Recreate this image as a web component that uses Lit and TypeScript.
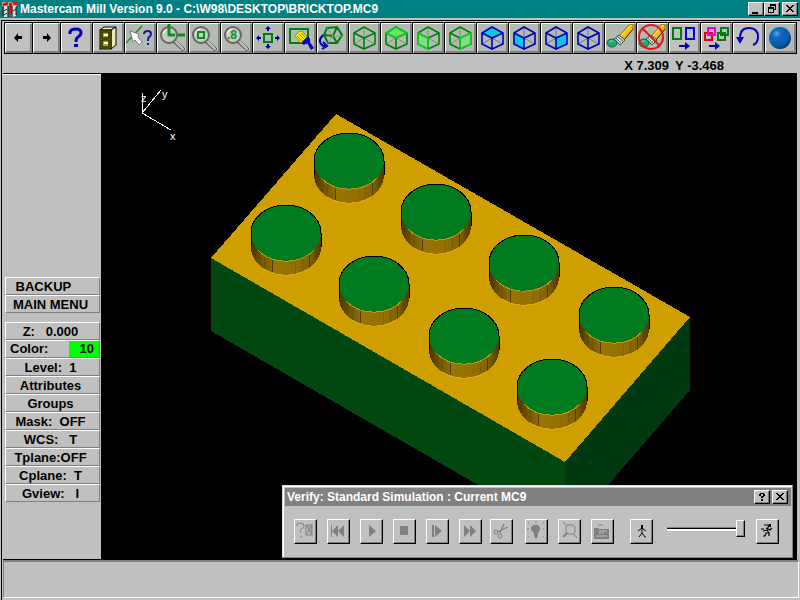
import { LitElement, html, css, svg } from "lit";
import { customElement, property } from "lit/decorators.js";
import { classMap } from "lit/directives/class-map.js";

const GREEN = "#007f10";
const BLUE = "#0000b8";

/* ---------- toolbar icons, drawn on a 31 x 30 grid ---------- */

const lens = (body: unknown) => svg`
  <path d="M17 18L26 26" stroke="#666" stroke-width="4" stroke-linecap="round"/>
  <path d="M18 18L26 26" stroke="#c8ccc8" stroke-width="2" stroke-linecap="round"/>
  <circle cx="12" cy="12" r="8" fill="#c4ccc4" stroke="#666" stroke-width="2"/>
  <path d="M6 11a6 6 0 0 1 5-5" fill="none" stroke="#fff" stroke-width="1"/>
  ${body}`;

const cube = (color: string, face = "", fill = "none") => {
  const faces: Record<string, string> = {
    top: "M15 4L26 10L15 15L5 10Z",
    left: "M5 10L15 15V26L5 21Z",
    right: "M26 10L15 15V26L26 21Z",
  };
  return svg`
    <path d="M15 4V15L5 21M15 15L26 21" fill="none" stroke=${color} stroke-opacity=".4"/>
    ${face ? svg`<path d=${faces[face]} fill=${fill} fill-opacity=".9"/>` : ""}
    <path d="M15 4L26 10V21L15 26L5 21V10Z" fill="none" stroke=${color} stroke-width="1.6"/>
    <path d="M5 10L15 15L26 10M15 15V26" fill="none" stroke=${color} stroke-width="1.6"/>
    ${face && color === GREEN ? svg`<path d=${faces[face]} fill="none" stroke="#10d818" stroke-width="1.4"/>` : ""}`;
};

const eraser = svg`
  <path d="M14 13L24 2L28 1V6L19 17Z" fill="#f0c010" stroke="#a07800"/>
  <path d="M16 13L26 2" stroke="#fff080"/>
  <path d="M28 6L19 17" stroke="#403000"/>
  <path d="M9 16L14 12L20 17L15 22Z" fill="#c8d0d0" stroke="#444"/>
  <path d="M10 14L17 21M12 13L19 19" stroke="#666"/>
  <path d="M12 15L15 18" stroke="#fff"/>
  <ellipse cx="7" cy="20" rx="5" ry="4" fill="#20a878" stroke="#066048"/>
  <path d="M4 19Q5 18 8 18" stroke="#80e0b8"/>`;

const arrow = (x: number) => svg`<path d="M${x} 22h6v-3l5 4l-5 4v-3h-6z" fill=${BLUE}/>`;
const box = (x: number, y: number, w: number, h: number, c: string) =>
  svg`<rect x=${x} y=${y} width=${w} height=${h} fill="none" stroke=${c} stroke-width="2"/>`;

const tools: { label: string; plain?: boolean; small?: boolean; icon: unknown }[] = [
  { label: "Previous page", plain: true, small: true,
    icon: svg`<path d="M9 15L13 10V13H17V16H13V19Z" fill="#000"/>` },
  { label: "Next page", plain: true, small: true,
    icon: svg`<path d="M18 15L14 10V13H10V16H14V19Z" fill="#000"/>` },
  { label: "Help", plain: true,
    icon: svg`<path d="M9 11V9Q10 6 15 6Q20 6 20 10Q20 12 17 14Q15 15 15 19" fill="none" stroke="#0000c8" stroke-width="3"/>
      <rect x="13" y="21" width="4" height="3" fill="#0000c8"/>` },
  { label: "File", plain: true,
    icon: svg`<path d="M7 7L11 4H23L18 7Z" fill="#f0f0c0" stroke="#000"/>
      <path d="M18 7L23 4V22L18 26Z" fill="#e8e8b8" stroke="#000"/>
      <rect x="7" y="7" width="11" height="19" fill="#8a8a00" stroke="#000"/>
      <rect x="9" y="9" width="7" height="6" fill="#a8a800" stroke="#000"/>
      <rect x="9" y="17" width="7" height="7" fill="#a8a800" stroke="#000"/>
      <path d="M11 12h4M11 20h4" stroke="#fff" stroke-width="2"/>` },
  { label: "Analyze",
    icon: svg`<path d="M1 20L17 3" stroke="#109020" stroke-width="1.5"/>
      <path d="M5 8L14 11L13 14L17 19L14 22L10 17L8 19Z" fill="#fff" stroke="#777"/>
      <path d="M19 11Q19 8 23 8Q26 8 26 11Q26 13 24 14Q23 15 23 18M23 20V22" fill="none" stroke="#1818a8" stroke-width="2"/>` },
  { label: "Zoom previous",
    icon: lens(svg`<path d="M12 1V12H18M21 12H28" fill="none" stroke="#089018" stroke-width="3"/>`) },
  { label: "Zoom window", icon: lens(box(9, 9, 6, 6, "#089018")) },
  { label: "Zoom eight tenths",
    icon: lens(svg`<text x="6" y="16" class="digit">.8</text>`) },
  { label: "Fit",
    icon: svg`${box(11, 11, 8, 8, GREEN)}
      <path d="M15 3L18 6H16V8H14V6H12ZM15 26L18 23H16V21H14V23H12ZM3 15L6 12V14H8V16H6V18ZM27 15L24 12V14H22V16H24V18Z" fill=${BLUE}/>` },
  { label: "Repaint",
    icon: svg`${box(5, 6, 18, 14, GREEN)}
      <path d="M10 13L13 9L17 8L22 14L16 20Z" fill="#f0e800" stroke="#a89800"/>
      <path d="M12 13L17 18M14 11L19 16M16 10L20 14" stroke="#a89800"/>
      <path d="M23 13L16 20L19 22L22 20L26 27L29 25L25 19V16Z" fill="#0808c8"/>` },
  { label: "Dynamic rotate",
    icon: svg`<path d="M10 5L20 4L25 12L20 20L11 20L7 12ZM7 12L16 13L20 4M16 13L20 20" fill="none" stroke=${GREEN} stroke-width="2"/>
      <path d="M10 5L16 13L11 20M16 13H25" fill="none" stroke="#78a078"/>
      <path d="M6 12Q1 17 4 21Q5 23 8 23M5 26L10 23L6 19" fill="none" stroke=${BLUE} stroke-width="2"/>` },
  { label: "Gview isometric", icon: cube(GREEN) },
  { label: "Gview top", icon: cube(GREEN, "top", "#60e860") },
  { label: "Gview front", icon: cube(GREEN, "left", "#80e080") },
  { label: "Gview side", icon: cube(GREEN, "right", "#80e080") },
  { label: "Cplane top", icon: cube(BLUE, "top", "#00c8d8") },
  { label: "Cplane front", icon: cube(BLUE, "left", "#00c8e8") },
  { label: "Cplane side", icon: cube(BLUE, "right", "#00c8e8") },
  { label: "Cplane 3D", icon: cube(BLUE) },
  { label: "Delete", icon: eraser },
  { label: "Undelete",
    icon: svg`${eraser}<circle cx="14" cy="14" r="12" fill="none" stroke="#f01010" stroke-width="2"/>
      <path d="M6 6L23 23" stroke="#f01010" stroke-width="2"/>` },
  { label: "Copy", plain: true, icon: svg`${box(4, 5, 8, 11, GREEN)}${box(17, 5, 8, 11, "#0000f0")}${arrow(10)}` },
  { label: "Clear colors", plain: true,
    icon: svg`${box(4, 10, 7, 7, "#e80010")}${box(7, 5, 7, 7, "#f000e0")}
      ${box(17, 10, 7, 7, GREEN)}${box(20, 5, 7, 7, GREEN)}${arrow(8)}` },
  { label: "Undo", plain: true,
    icon: svg`<path d="M7 15Q7 5 16 5Q25 5 25 14Q25 20 20 22" fill="none" stroke=${BLUE} stroke-width="2"/>
      <path d="M3 14H11L7 21Z" fill=${BLUE}/>` },
  { label: "Shade",
    icon: svg`<defs><radialGradient id="ball" cx=".35" cy=".3" r=".75">
        <stop offset="0" stop-color="#58a8e8"/><stop offset=".25" stop-color="#1068c0"/>
        <stop offset=".75" stop-color="#0858a8"/><stop offset="1" stop-color="#043868"/>
      </radialGradient></defs><circle cx="15" cy="15" r="11" fill="url(#ball)"/>` },
];

/* ---------- simulation icons, drawn on a 23 x 25 grid ---------- */

const sim = {
  options: svg`<path d="M3 7V5Q4 4 7 4Q10 4 10 7Q10 9 7 10Q6 11 7 14M7 17V19" fill="none" stroke="#808080"/>
    <path d="M12 6H18V16H12ZM12 6L18 16M18 6L12 16M14 8H17V14" fill="none" stroke="#808080"/>`,
  rewind: svg`<path d="M4 6H5V18H4ZM11 6V18L5 12ZM17 6V18L11 12Z" fill="#808080"/>`,
  play: svg`<path d="M9 6L16 12L9 18Z" fill="#808080"/>`,
  stop: svg`<rect x="7" y="7" width="8" height="9" fill="#808080"/>`,
  step: svg`<path d="M6 6H8V18H6ZM9 6L16 12L9 18Z" fill="#808080"/>`,
  fast: svg`<path d="M5 6L11 12L5 18ZM11 6L17 12L11 18Z" fill="#808080"/>`,
  cut: svg`<path d="M14 5L10 14M18 8L7 13" stroke="#808080" stroke-width="1.3" fill="none"/>
    <circle cx="6" cy="13" r="2" fill="none" stroke="#808080"/><circle cx="10" cy="17" r="2" fill="none" stroke="#808080"/>`,
  lamp: svg`<path d="M7 7Q11 4 14 7Q17 10 13 14V17L11 20L9 17V14Q4 10 7 7Z" fill="#808080"/>
    <path d="M3 4h1M11 2v2M18 4h1M2 10h2M18 10h1M3 18h1M18 18h1" stroke="#808080"/>`,
  zoom: svg`<path d="M9 6H15L17 8V13L15 15H10L8 13V8ZM5 3L9 7M15 14L19 19" fill="none" stroke="#808080"/>
    <path d="M9 14L5 18" stroke="#808080" stroke-width="2"/>`,
  tool: svg`<path d="M3 9H7L8 10H18V20H3Z" fill="#808080"/>
    <path d="M8 12H16M5 17H16M9 13V15M12 13V15" stroke="#c0c0c0"/><path d="M7 6H12" stroke="#808080"/>`,
  walk: svg`<path d="M12 6V14M8 12L12 9L16 12M12 14L9 18M12 14L15 18H16" fill="none" stroke="#000"/><rect x="11" y="6" width="2" height="3"/>`,
  run: svg`<path d="M8 6H13L11 11L7 12M10 9L14 11L16 9M11 11L13 14L10 14L9 17H7M5 10H8M13 14V17" fill="none" stroke="#000" stroke-width="1.2"/>
    <rect x="13" y="5" width="2" height="3"/>`,
};

/* ---------- brick geometry ---------- */

const studs = [
  [349, 161], [436, 212], [524, 263], [614, 315],
  [286, 233], [374, 284], [464, 336], [552, 387],
];
const RX = 35;
const RY = 28;
const DEPTH = 14;
const facets = [
  { x: -31, c: "#584200" }, { x: -27, c: "#5c4600" }, { x: -22, c: "#6c5200" },
  { x: -14, c: "#503c00" }, { x: 9, c: "#846400" },
  { x: 16, c: "#785c00" }, { x: 23, c: "#503c00" }, { x: 29, c: "#604800" },
];
const rim = (x: number) => Math.round(RY * Math.sqrt(1 - (x * x) / (RX * RX)));

const stud = ([x, y]: number[]) => svg`
  <path d="M${x - RX} ${y}V${y + DEPTH}A${RX} ${RY} 0 0 0 ${x + RX} ${y + DEPTH}V${y}Z" fill="url(#wall)"/>
  ${facets.map((f) => svg`<path d="M${x + f.x} ${y + rim(f.x)}v${DEPTH - 1}" stroke=${f.c}/>`)}
  <path d="M${x - 22} ${y + DEPTH + rim(22)}A${RX} ${RY} 0 0 0 ${x + 22} ${y + DEPTH + rim(22)}" fill="none" stroke="#d8aa20"/>
  <ellipse cx=${x} cy=${y} rx=${RX} ry=${RY} fill="#007b20"/>
  <path d="M${x - RX} ${y + DEPTH}V${y}A${RX} ${RY} 0 0 1 ${x + RX} ${y}V${y + DEPTH}" fill="none" stroke="#000"/>
  <path d="M${x - 28} ${y + rim(28)}A${RX} ${RY} 0 0 0 ${x + 28} ${y + rim(28)}" fill="none" stroke="#b89818"/>`;

@customElement("brick-view")
class BrickView extends LitElement {
  static styles = css`
    :host { display: block; background: #000; overflow: hidden; }
    .scene { display: block; width: 100%; height: 100%; }
    .axis { font: 11px "Liberation Sans", sans-serif; fill: #fff; }
  `;
  render() {
    return html`<svg class="scene" viewBox="101 74 696 485" preserveAspectRatio="xMinYMin meet" role="img" aria-label="Shaded brick">
      <defs><linearGradient id="wall">
        <stop offset="0" stop-color="#403000"/><stop offset=".12" stop-color="#6c5200"/>
        <stop offset=".28" stop-color="#886800"/><stop offset=".32" stop-color="#987400"/>
        <stop offset=".65" stop-color="#947000"/><stop offset=".85" stop-color="#806000"/>
        <stop offset="1" stop-color="#4c3800"/>
      </linearGradient></defs>
      <g shape-rendering="crispEdges">
        <path d="M142 93V113L161 90M142 113L171 130" fill="none" stroke="#fff"/>
        <path d="M211 258L565 462V535L211 331Z" fill="#004810"/>
        <path d="M565 462L690 317V390L565 535Z" fill="#003810"/>
        <path d="M336 114L690 317L565 462L211 258Z" fill="#cf9f00"/>
        ${studs.map(stud)}
      </g>
      <text class="axis" x="141" y="102">z</text>
      <text class="axis" x="162" y="98">y</text>
      <text class="axis" x="170" y="140">x</text>
    </svg>`;
  }
}

const captionGlyphs: Record<string, unknown> = {
  Minimize: svg`<path d="M3 9h6v2h-6z"/>`,
  Restore: svg`<path d="M5 1h6v6h-2v-1h1v-3h-4v1h-1zM3 4h6v6h-6zM4 6v3h4v-3z" fill-rule="evenodd"/>`,
  Help: svg`<path d="M4 3h1v-1h4v1h1v2h-1v1h-1v1h-2v-2h2v-2h-2v2h-2zM6 8h2v2h-2z"/>`,
  Close: svg`<path d="M3 2h2v1h1v1h2v-1h1v-1h2v1h-1v1h-1v1h-1v1h1v1h1v1h1v1h-2v-1h-1v-1h-2v1h-1v1h-2v-1h1v-1h1v-1h1v-1h-1v-1h-1v-1h-1z"/>`,
};

@customElement("caption-button")
class CaptionButton extends LitElement {
  @property() kind = "Close";
  static styles = css`
    :host { display: block; }
    .key {
      display: block; box-sizing: border-box; width: 16px; height: 14px; padding: 0;
      background: #c0c0c0; border: 1px solid; border-color: #fff #000 #000 #fff;
      box-shadow: inset -1px -1px #808080;
    }
    .glyph { display: block; width: 14px; height: 12px; }
  `;
  render() {
    return html`<button class="key" aria-label=${this.kind}>
      <svg class="glyph" viewBox="0 0 14 12" shape-rendering="crispEdges">${captionGlyphs[this.kind]}</svg>
    </button>`;
  }
}

@customElement("verify-dialog")
class VerifyDialog extends LitElement {
  static styles = css`
    :host {
      display: block; box-sizing: border-box; background: #c0c0c0; border: 1px solid;
      border-color: #dfdfdf #808080 #808080 #dfdfdf; box-shadow: inset 1px 1px #fff;
      padding: 2px 1px 13px 2px;
    }
    .caption {
      display: flex; align-items: center; height: 18px; padding: 0 3px 0 2px;
      background: #808080; color: #fff; font: bold 12px/18px "Liberation Sans", Arial, sans-serif;
    }
    .name { flex: 1; margin: 0; font: inherit; white-space: nowrap; }
    .keys { display: flex; gap: 2px; }
    .row { display: flex; align-items: center; padding: 13px 12px 0 9px; }
    .group { display: flex; gap: 10px; margin-right: 8px; }
    .single { margin-right: 12px; }
    .last { margin-right: 16px; }
    .key {
      display: block; box-sizing: border-box; flex: none; width: 23px; height: 25px; padding: 0;
      background: #c0c0c0; border: 1px solid; border-color: #fff #000 #000 #fff;
      box-shadow: inset -1px -1px #808080;
    }
    .glyph { display: block; width: 21px; height: 23px; }
    .speed {
      -webkit-appearance: none; appearance: none; flex: 1; min-width: 0; height: 18px;
      margin: 0 11px 6px 14px; background: none;
    }
    .speed::-webkit-slider-runnable-track {
      height: 4px; box-sizing: border-box; background: #000;
      border-top: 1px solid #808080; border-bottom: 2px solid #fff;
    }
    .speed::-webkit-slider-thumb {
      -webkit-appearance: none; box-sizing: border-box; width: 9px; height: 17px; margin-top: -8px;
      background: #c0c0c0; border: 1px solid; border-color: #fff #000 #000 #fff;
      box-shadow: inset -1px -1px #808080;
    }
  `;
  key(label: string, icon: unknown, disabled = true) {
    return html`<button class="key" aria-label=${label} ?disabled=${disabled}>
      <svg class="glyph" viewBox="1 1 21 23">${icon}</svg>
    </button>`;
  }
  render() {
    return html`
      <div class="caption">
        <h2 class="name">Verify: Standard Simulation : Current MC9</h2>
        <div class="keys"><caption-button kind="Help"></caption-button><caption-button kind="Close"></caption-button></div>
      </div>
      <div class="row">
        <div class="group">
          ${this.key("Configure", sim.options)}${this.key("Restart", sim.rewind)}${this.key("Machine", sim.play)}
          ${this.key("Stop", sim.stop)}${this.key("Step", sim.step)}${this.key("Fast forward", sim.fast)}
        </div>
        <div class="single">${this.key("Section", sim.cut)}</div>
        <div class="group last">
          ${this.key("Light", sim.lamp)}${this.key("Zoom", sim.zoom)}${this.key("Tool", sim.tool)}
        </div>
        ${this.key("Slower", sim.walk, false)}
        <input class="speed" type="range" min="0" max="100" value="100" aria-label="Simulation speed">
        ${this.key("Faster", sim.run, false)}
      </div>`;
  }
}

@customElement("app-root")
class AppRoot extends LitElement {
  static styles = css`
    :host {
      display: flex; flex-direction: column; box-sizing: border-box; height: 100vh;
      background: #c0c0c0; color: #000; font: bold 13px/17px "Liberation Sans", Arial, sans-serif;
    }
    .titlebar {
      display: flex; align-items: center; flex: none; height: 18px; padding: 0 2px 0 1px;
      background: #008080; color: #fff;
    }
    .logo { flex: none; width: 18px; height: 17px; margin-right: 1px; }
    .title { flex: 1; margin: 0; font: bold 12px/18px "Liberation Sans", Arial, sans-serif; white-space: nowrap; }
    .keys { display: flex; }
    .close { margin-left: 2px; }
    .frame {
      display: flex; flex: 1; flex-direction: column; min-height: 0; margin-top: 2px;
      border-top: 1px solid #000; border-left: 1px solid #000; margin-left: 1px; padding-left: 1px;
    }
    .toolbar {
      display: flex; gap: 1px; flex: none; align-self: flex-start; margin: 1px 0 0 1px;
      padding: 1px; background: #000;
    }
    .tool {
      box-sizing: border-box; width: 31px; height: 30px; padding: 0; background: #b2bab2;
      border: 1px solid; border-color: #fff #808080 #808080 #fff; box-shadow: inset -1px -1px #808080;
    }
    .plain { background: #c0c0c0; }
    .small { width: 27px; }
    .glyph { display: block; width: 100%; height: 100%; }
    .digit { font: bold 12px "Liberation Sans", sans-serif; fill: #089018; }
    .coords {
      display: flex; flex: none; justify-content: flex-end; gap: 6px; height: 19px;
      padding-right: 76px; line-height: 23px; white-space: pre;
    }
    .work {
      display: flex; flex: 1; min-height: 0; margin-right: 3px;
      border-top: 1px solid #000; border-bottom: 1px solid #000;
    }
    .menu {
      display: flex; flex-direction: column; flex: none; justify-content: flex-end;
      box-sizing: border-box; width: 98px; padding: 0 1px 57px 2px; border-top: 1px solid #fff;
    }
    .item {
      display: block; box-sizing: border-box; flex: none; width: 100%; height: 18px; padding: 0 4px 0 0;
      background: #c0c0c0; color: #000; border: 1px solid; border-color: #fff #808080 #808080 #fff;
      font: inherit; line-height: 15px; text-align: center; white-space: pre; cursor: pointer;
    }
    .gap { margin-bottom: 9px; }
    .split { display: flex; justify-content: space-between; padding: 0 0 0 4px; line-height: 16px; }
    .swatch { box-sizing: border-box; width: 30px; padding-right: 5px; background: #00ff00; text-align: right; }
    .stage { position: relative; flex: 1; min-width: 0; }
    .view { width: 100%; height: 100%; }
    .dialog { position: absolute; right: 4px; bottom: 1px; width: 511px; max-width: 100%; }
    .status {
      flex: none; height: 38px; box-sizing: border-box; margin: 0 1px 2px 0; border: 1px solid;
      border-width: 2px 1px 1px 1px; border-color: #808080 #fff #fff #808080;
    }
  `;
  item(text: string, gap = false) {
    return html`<button class=${classMap({ item: true, gap })}>${text}</button>`;
  }
  render() {
    return html`
      <header class="titlebar">
        <svg class="logo" viewBox="0 0 18 17" aria-hidden="true">
          <path d="M1 1H16V5H14V16H10V5H7V16H3V5H1Z" fill="#a8a8a8"/>
          <path d="M3 5H6V16H3ZM12 5H15V15H12Z" fill="#ddd"/>
          <path d="M1 3L7 1V4L3 5ZM8 2H11V13H8ZM11 1H16V4H13Z" fill="#e01010"/>
          <path d="M7 5V16M11 5V16M2 6V15M15 6V14M3 10L6 8M3 14L6 12M12 10L15 8" stroke="#302020"/>
        </svg>
        <h1 class="title">Mastercam Mill Version 9.0 - C:\\W98\\DESKTOP\\BRICKTOP.MC9</h1>
        <div class="keys">
          <caption-button kind="Minimize"></caption-button><caption-button kind="Restore"></caption-button>
          <caption-button class="close" kind="Close"></caption-button>
        </div>
      </header>
      <div class="frame">
        <nav class="toolbar" aria-label="Tools">
          ${tools.map((t) => html`<button class=${classMap({ tool: true, plain: !!t.plain, small: !!t.small })} aria-label=${t.label}>
            <svg class="glyph" viewBox=${t.small ? "1 1 25 28" : "1 1 29 28"} fill="none">${t.icon}</svg>
          </button>`)}
        </nav>
        <div class="coords"><span>X 7.309</span><span>Y -3.468</span></div>
        <main class="work">
          <nav class="menu" aria-label="Main menu">
            ${this.item("BACKUP    ")}
            ${this.item("MAIN MENU", true)}
            ${this.item("Z:   0.000")}
            <button class="item split"><span>Color:</span><span class="swatch">10</span></button>
            ${["Level:  1", "Attributes", "Groups", "Mask:  OFF", "WCS:   T", "Tplane:OFF", "Cplane:  T", "Gview:   I"].map((t) => this.item(t))}
          </nav>
          <div class="stage">
            <brick-view class="view"></brick-view>
            <verify-dialog class="dialog"></verify-dialog>
          </div>
        </main>
        <footer class="status" role="status"></footer>
      </div>`;
  }
}
